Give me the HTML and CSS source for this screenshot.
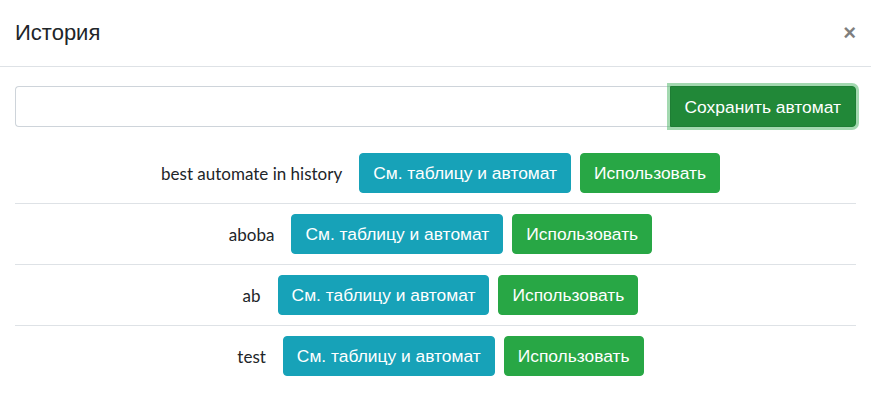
FILE: index.html
```html
<!DOCTYPE html>
<html lang="ru">
<head>
<meta charset="utf-8">
<title>История</title>
<link rel="stylesheet" href="styles.css">
</head>
<body>
<div class="modal">
  <div class="modal-header">
    <h5 class="modal-title">История</h5>
    <button class="close" type="button">×</button>
  </div>
  <div class="modal-body">
    <div class="input-group">
      <input class="form-control" type="text">
      <button class="btn btn-save" type="button">Сохранить автомат</button>
    </div>
    <div class="history">
      <div class="row">
        <span class="name">best automate in history</span>
        <button class="btn btn-info" type="button">См. таблицу и автомат</button>
        <button class="btn btn-success" type="button">Использовать</button>
      </div>
      <div class="row">
        <span class="name">aboba</span>
        <button class="btn btn-info" type="button">См. таблицу и автомат</button>
        <button class="btn btn-success" type="button">Использовать</button>
      </div>
      <div class="row">
        <span class="name">ab</span>
        <button class="btn btn-info" type="button">См. таблицу и автомат</button>
        <button class="btn btn-success" type="button">Использовать</button>
      </div>
      <div class="row">
        <span class="name">test</span>
        <button class="btn btn-info" type="button">См. таблицу и автомат</button>
        <button class="btn btn-success" type="button">Использовать</button>
      </div>
    </div>
  </div>
</div>
</body>
</html>
```
FILE: styles.css
```css
* { box-sizing: border-box; }
html, body { margin: 0; padding: 0; background: #fff; }
body {
  font-family: "Liberation Sans", Arial, sans-serif;
  color: #212529;
}
.modal { width: 871px; }
.modal-header {
  height: 67px;
  padding: 0 15px;
  display: flex;
  align-items: center;
  justify-content: space-between;
  border-bottom: 1px solid #dee2e6;
}
.modal-title {
  margin: 0;
  font-size: 22px;
  font-weight: 400;
  line-height: 30px;
  color: #212529;
}
.close {
  border: 0;
  background: transparent;
  padding: 0;
  font-family: "Liberation Sans", Arial, sans-serif;
  font-size: 22px;
  font-weight: 700;
  line-height: 1;
  color: #000;
  opacity: .5;
}
.modal-body { padding: 19px 15px 15px; }
.input-group { display: flex; height: 41px; }
.form-control {
  flex: 1;
  min-width: 0;
  height: 41px;
  border: 1px solid #ced4da;
  border-right: 0;
  border-radius: 4px 0 0 4px;
  padding: 6px 12px;
  font-size: 16px;
}
.btn {
  font-family: "Liberation Sans", Arial, sans-serif;
  font-size: 17.4px;
  line-height: 26px;
  padding: 6px 13px;
  border: 1px solid transparent;
  border-radius: 4px;
  color: #fff;
  white-space: nowrap;
}
.btn-save {
  height: 41px;
  padding: 6px 14px;
  background: #218838;
  border-color: #1e7e34;
  border-radius: 0 4px 4px 0;
  box-shadow: 0 0 0 3px rgba(72, 180, 97, .5);
}
.history { margin-top: 16px; }
.row {
  display: flex;
  align-items: center;
  justify-content: center;
  gap: 9px;
  padding: 10px 0 10px 10px;
  border-bottom: 1px solid #dee2e6;
}
.row:last-child { border-bottom: 0; }
.name {
  font-family: Lato, "Noto Sans", sans-serif;
  font-size: 17px;
  margin-right: 8px;
  color: #212529;
}
.btn-info { background: #17a2b8; border-color: #17a2b8; }
.btn-success { background: #28a745; border-color: #28a745; }
```
